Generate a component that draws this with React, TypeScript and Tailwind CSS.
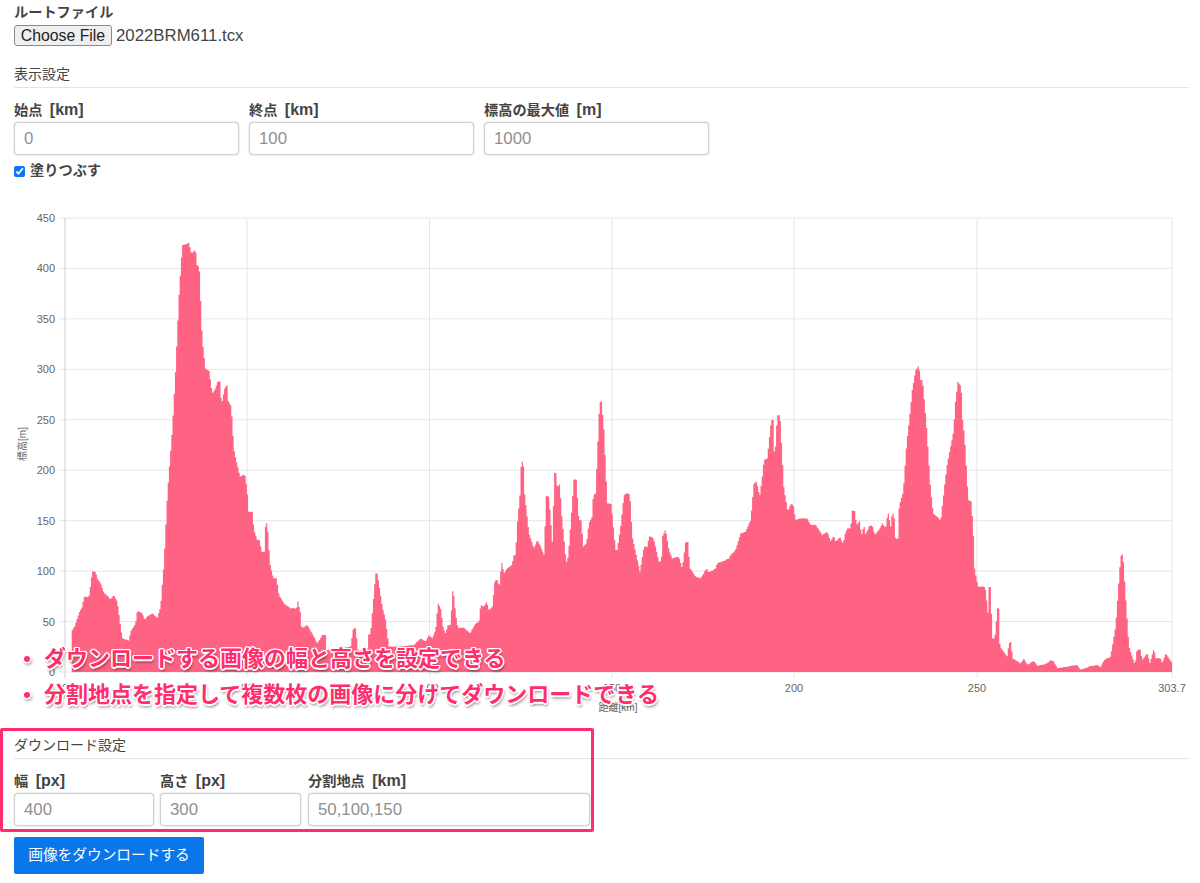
import React from "react";

const z3 = "215,1325 215,1200 222,1190 235,1150 245,1130 250,1100 265,1100 275,1025 285,1025 290,1045 300,1060 310,1090 325,1100 328,1110 340,1095 350,1115 365,1225 385,1232 390,1205 405,1180 410,1142 425,1150 432,1170 440,1160 455,1150 470,1165 480,1130 490,1000 500,800 505,730 515,600 525,420 535,200 545,45 565,40 572,70 585,60 590,110 596,110 605,330 615,420 625,420 635,490 645,475 650,455 658,455 663,525 672,475 680,465 682,510 692,530 700,660 718,740 725,735 733,735 740,780 743,845 755,845 760,900 770,930 778,930 782,965 792,965 795,880 800,880 808,1000 818,1045 828,1045 835,1095 850,1120 870,1135 888,1135 890,1108 900,1150 903,1195 920,1185 940,1220 950,1240 965,1215 975,1215 978,1260 1050,1250 1058,1195 1065,1195 1072,1260 1100,1265 1103,1215 1110,1210 1125,1030 1130,1030 1145,1130 1155,1170 1165,1250 1195,1250";
const z4 = "0,800 40,795 60,775 75,785 85,765 95,775 105,750 112,670 120,685 128,745 135,760 142,735 150,735 157,620 165,700 172,745 190,742 208,760 225,730 235,725 240,675 250,680 258,665 265,692 275,680 283,600 292,600 295,630 303,545 310,580 320,565 335,555 338,525 345,525 350,430 358,345 362,245 368,245 372,340 385,460 400,505 410,480 418,495 430,525 437,348 445,350 455,485 462,278 467,280 470,325 478,310 482,390 497,548 503,530 520,296 527,300 535,420 542,422 548,500 558,488 565,430 575,410 578,345 585,340 597,65 603,65 610,150 620,370 632,372 645,510 650,510 660,440 670,345 680,338 688,345 695,470 718,575 730,500 740,500 745,470 755,470 760,480 775,545 782,545 785,470 795,448 805,510 815,535 835,530 845,565 855,485 862,485 868,565 885,590 900,595 918,565 925,578 945,565 950,550 965,545 985,535 990,525 1005,510 1020,460 1035,455 1050,420 1060,310 1068,305 1077,350 1085,290 1090,240 1100,235 1112,120 1118,120 1122,245 1130,105 1138,105 1150,325 1162,395 1170,372 1178,375 1185,420 1198,415";
const z5 = "0,505 20,505 30,525 45,525 65,555 80,545 90,572 100,558 105,575 118,562 128,582 132,555 140,535 150,535 155,482 162,482 168,525 178,512 182,560 190,525 195,555 205,530 215,525 222,555 235,540 245,520 255,535 262,485 270,530 275,490 280,490 285,570 292,565 293,490 298,460 308,425 318,280 325,220 335,120 345,60 355,48 360,90 366,90 378,230 390,420 398,490 415,505 420,515 432,405 440,340 458,250 465,150 472,95 482,110 485,200 492,260 500,400 503,450 512,455 518,540 522,655 532,710 552,710 555,720 562,790 565,712 570,712 575,865 582,865 585,840 590,775 595,775 598,890 620,920 625,880 632,875 635,925 660,940 670,925 680,945 700,932 710,948 740,940 750,930 760,935 770,955 830,945 840,960 870,948 890,945 900,952 910,930 930,920 945,830 960,620 967,610 975,740 985,890 1003,945 1008,905 1018,895 1025,930 1040,910 1048,940 1060,895 1065,925 1080,925 1085,940 1095,910 1108,930 1115,938 1117,965";

const conv = (s: string, ox: number, oy: number) =>
  s.split(" ").map((p) => {
    const [x, y] = p.split(",").map(Number);
    return [ox + x / 3, oy + y / 3] as [number, number];
  });

const raw = [...conv(z3, 0, 230), ...conv(z4, 400, 380), ...conv(z5, 800, 350)];

// The reference's profile is a dense stepped line, so it is resampled to small steps.
function stepped(pts: [number, number][]) {
  const out: string[] = ["71.7,672"];
  const step = 1.2;
  let i = 0;
  let n = 0;
  for (let x = pts[0][0]; x < 1172; x += step) {
    while (i < pts.length - 2 && pts[i + 1][0] < x) i++;
    const [x0, y0] = pts[i];
    const [x1, y1] = pts[i + 1];
    const t = x1 === x0 ? 1 : Math.min(1, Math.max(0, (x - x0) / (x1 - x0)));
    n++;
    const noise = Math.sin(n * 12.9898) * 43758.5453;
    const jitter = (noise - Math.floor(noise) - 0.5) * 0.6;
    const y = Math.min(672, y0 + (y1 - y0) * t + jitter);
    out.push(`${x.toFixed(1)},${y.toFixed(1)}`, `${(x + step).toFixed(1)},${y.toFixed(1)}`);
  }
  out.push("1172,672");
  return out.join(" ");
}
const profile = stepped(raw);

const yTicks = [0, 50, 100, 150, 200, 250, 300, 350, 400, 450];
const xTicks = [
  { x: 65, l: "0" },
  { x: 247, l: "50" },
  { x: 429.5, l: "100" },
  { x: 612, l: "150" },
  { x: 794, l: "200" },
  { x: 977, l: "250" },
  { x: 1172, l: "303.7" },
];
const yOf = (v: number) => 672 - (v / 450) * 454;

function Field({ label, unit, value, className }: { label: string; unit: string; value: string; className: string }) {
  return (
    <div className={className}>
      <div className="h-[20px] text-[14.2px] leading-[20px] font-bold text-[#444]">
        {label}
        <span className="ml-[3px] text-[16px]"> {unit}</span>
      </div>
      <input
        readOnly
        placeholder={value}
        className="mt-[2px] h-[33px] w-full rounded-[4px] border border-[#d0d0d0] bg-white px-[9px] text-[16.8px] shadow-[0_0_1.5px_#bbb] outline-none placeholder:text-[#8f8f8f]"
      />
    </div>
  );
}

const outline =
  "[text-shadow:1.5px_0_0_#fff,-1.5px_0_0_#fff,0_1.5px_0_#fff,0_-1.5px_0_#fff,1px_1px_0_#fff,-1px_1px_0_#fff,1px_-1px_0_#fff,-1px_-1px_0_#fff,1px_3px_3px_#0000007a]";

function Note({ children }: { children: string }) {
  return (
    <div className={`flex h-[36px] items-center text-[#ff2d6c] ${outline}`}>
      <span className="ml-[10px] h-[6px] w-[6px] rounded-full bg-[#ff2d6c] shadow-[0_0_0_1.5px_#fff,1px_2px_3px_1px_#0000005a]" />
      <span className="ml-[14px] text-[22px] leading-[36px] font-bold">{children}</span>
    </div>
  );
}

export default function App() {
  return (
    <div
      className="relative h-[883px] w-[1200px] overflow-hidden bg-white text-[#333]"
      style={{ fontFamily: '"Liberation Sans", "Noto Sans CJK JP", sans-serif' }}
    >
      <div className="pt-[2px] pr-[11px] pl-[14px]">
        <div className="h-[20px] text-[14.2px] leading-[20px] font-bold text-[#444]">ルートファイル</div>
        <div className="mt-[3px] flex h-[21px] items-center">
          <button className="h-[21px] w-[98px] rounded-[3px] border border-[#8a8a8a] bg-[#efefef] text-[15.8px] leading-[19px] text-[#222]">
            Choose File
          </button>
          <span className="ml-[4px] text-[16.8px] text-[#444]">2022BRM611.tcx</span>
        </div>
        <div className="mt-[18px] h-[24px] border-b border-[#e3e3e3] text-[14px] leading-[20px] text-[#444]">表示設定</div>
        <div className="mt-[12px] flex gap-[10px]">
          <Field label="始点" unit="[km]" value="0" className="w-[225px]" />
          <Field label="終点" unit="[km]" value="100" className="w-[225px]" />
          <Field label="標高の最大値" unit="[m]" value="1000" className="w-[225px]" />
        </div>
        <label className="mt-[6px] flex h-[20px] items-center text-[14.2px] font-bold text-[#444]">
          <input type="checkbox" defaultChecked readOnly className="mr-[5px] h-[11px] w-[11px] accent-[#0a76f6]" />
          塗りつぶす
        </label>
      </div>

      <svg viewBox="0 200 1200 516" className="mt-[19px] block h-[516px] w-[1200px]">
        <g stroke="#e6e6e6" strokeWidth="1">
          {yTicks.map((v) => (
            <line key={v} x1="59" x2="1172" y1={yOf(v)} y2={yOf(v)} />
          ))}
          {xTicks.map((t) => (
            <line key={t.x} x1={t.x} x2={t.x} y1="218" y2="678" stroke={t.x === 65 ? "#d0d0d0" : "#e6e6e6"} />
          ))}
        </g>
        <polygon points={profile} fill="#ff6384" />
        <g fill="#666" fontSize="11" fontFamily='"Liberation Sans", sans-serif'>
          {yTicks.map((v) => (
            <text key={v} x="55" y={yOf(v) + 4} textAnchor="end">
              {v}
            </text>
          ))}
          {xTicks.map((t) => (
            <text key={t.x} x={t.x} y="692" textAnchor="middle">
              {t.l}
            </text>
          ))}
        </g>
        <text x="0" y="0" fill="#666" fontSize="10" textAnchor="middle" transform="translate(26 444) rotate(-90)">
          標高[m]
        </text>
        <text x="618" y="711" fill="#666" fontSize="10" textAnchor="middle">
          距離[km]
        </text>
      </svg>

      <div className="absolute top-[641px] left-[14px]">
        <Note>ダウンロードする画像の幅と高さを設定できる</Note>
        <Note>分割地点を指定して複数枚の画像に分けてダウンロードできる</Note>
      </div>

      <div className="relative pr-[11px] pl-[14px]">
        <div className="mt-[19px] h-[24px] border-b border-[#e3e3e3] text-[14px] leading-[20px] text-[#444]">ダウンロード設定</div>
        <div className="mt-[12px] flex">
          <Field label="幅" unit="[px]" value="400" className="w-[140px]" />
          <Field label="高さ" unit="[px]" value="300" className="ml-[6px] w-[141px]" />
          <Field label="分割地点" unit="[km]" value="50,100,150" className="ml-[7px] w-[282px]" />
        </div>
        <button className="mt-[11px] h-[37px] w-[190px] rounded-[2px] bg-[#0a76e8] text-[14.7px] text-white">
          画像をダウンロードする
        </button>
        <div className="absolute top-[-7px] left-[0px] h-[104px] w-[594px] rounded-[2px] border-[3px] border-[#ff2d6c]" />
      </div>
    </div>
  );
}
